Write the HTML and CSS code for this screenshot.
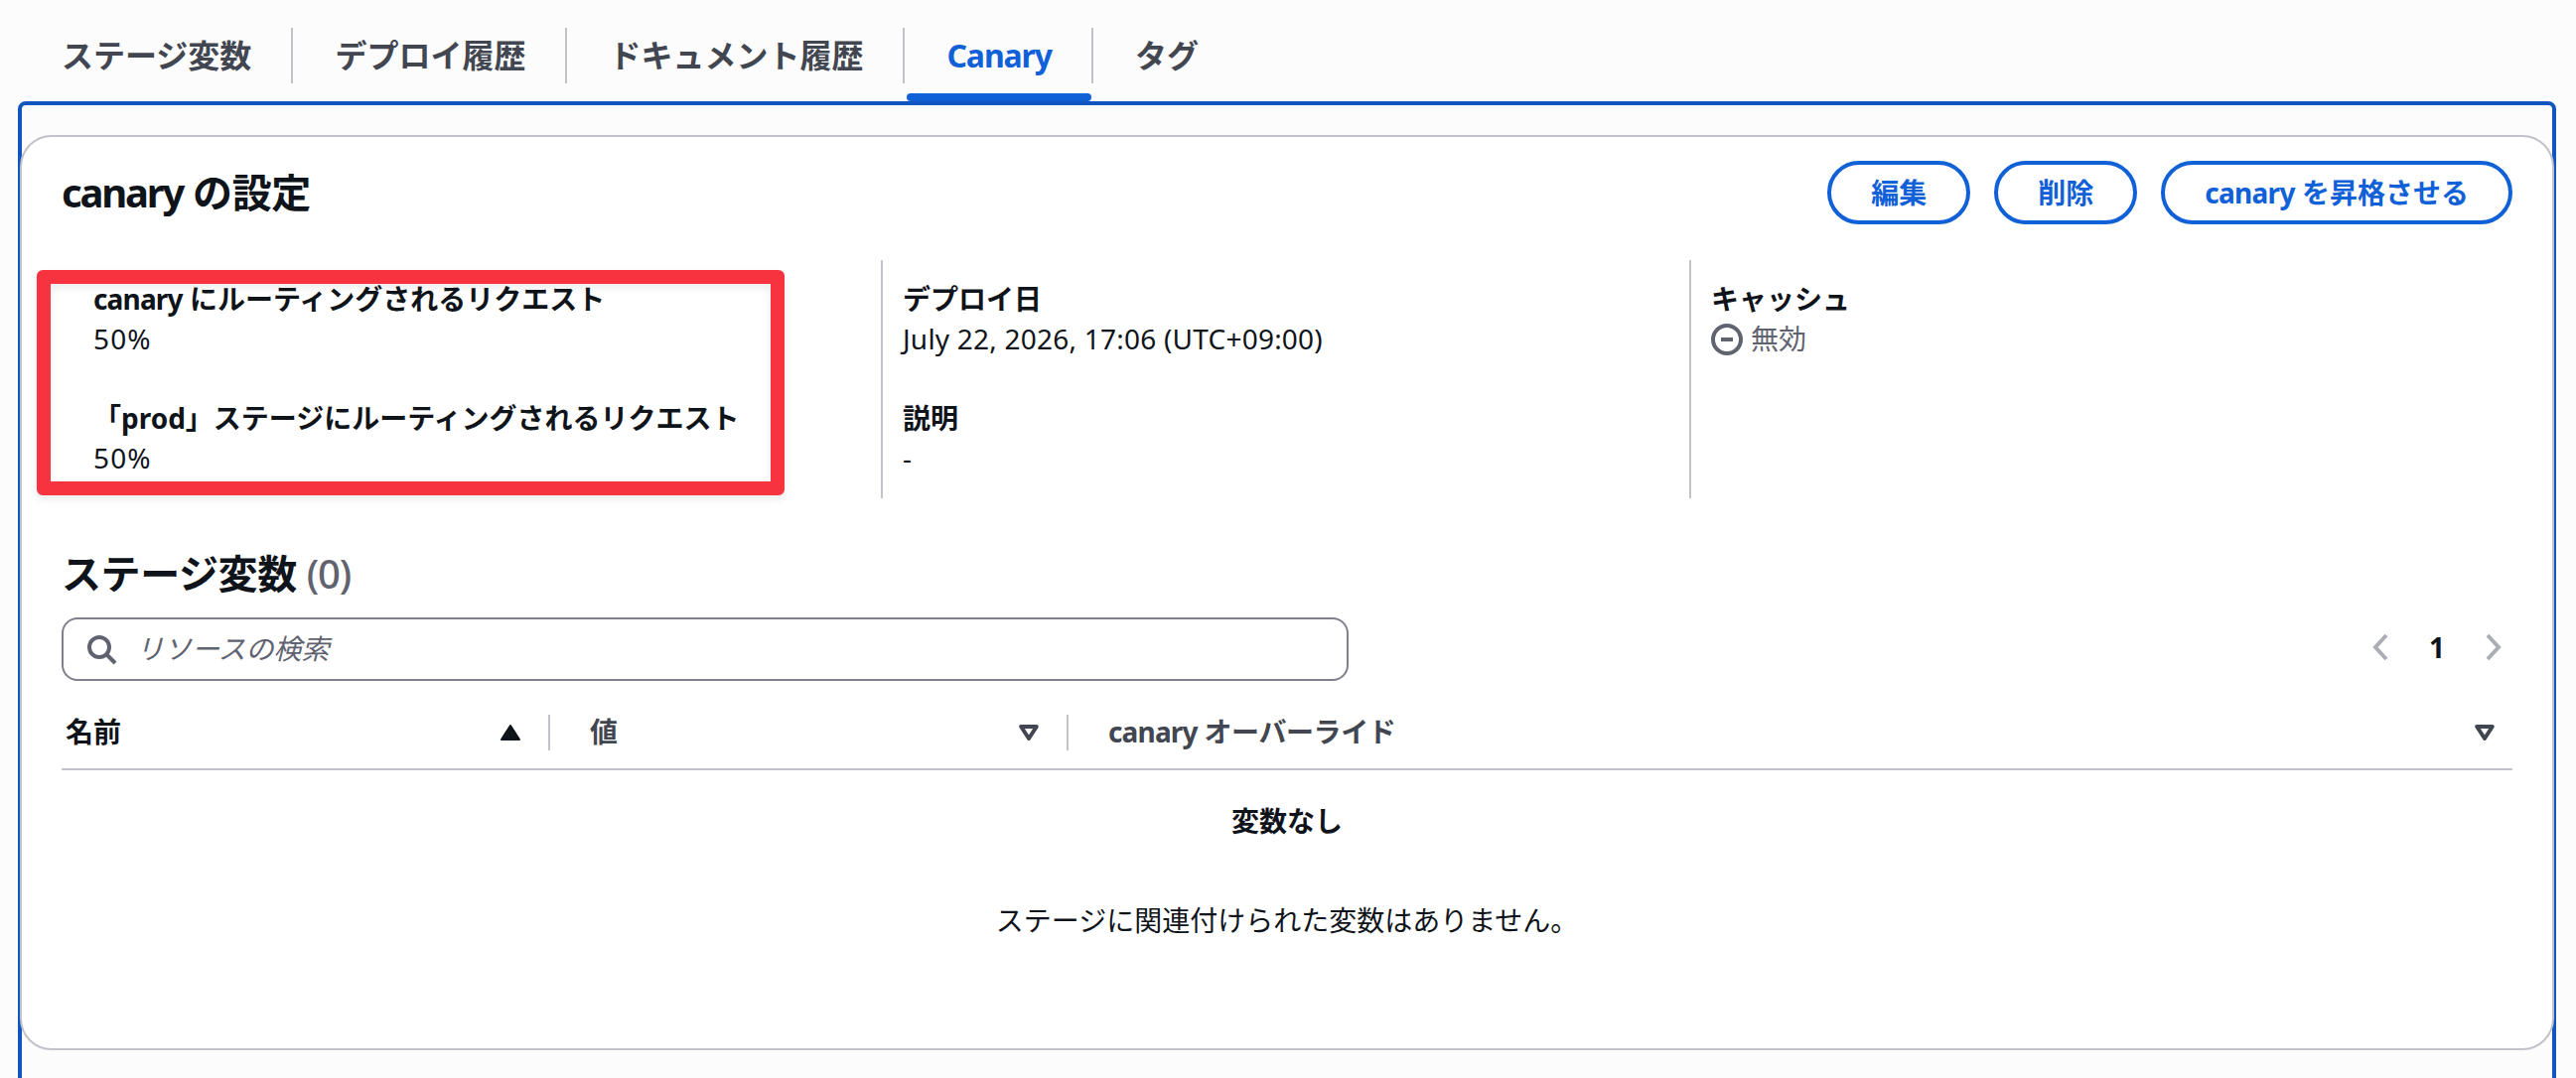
FILE: index.html
```html
<!DOCTYPE html>
<html lang="ja">
<head>
    <meta charset="utf-8">
    <title>Canary</title>
    <link rel="stylesheet" href="styles.css">
</head>
<body>
    <nav class="tabs">
        <a class="tab">ステージ変数</a>
        <a class="tab">デプロイ履歴</a>
        <a class="tab">ドキュメント履歴</a>
        <a class="tab active"><span class="en">Canary</span></a>
        <a class="tab">タグ</a>
    </nav>

    <main class="tab-content">
        <section class="card">
            <header class="card-header">
                <h2><span class="en">canary</span> の設定</h2>
                <div class="actions">
                    <button type="button">編集</button>
                    <button type="button">削除</button>
                    <button type="button"><span class="en">canary</span> を昇格させる</button>
                </div>
            </header>

            <div class="details">
                <div class="column first">
                    <div class="item">
                        <div class="label"><span class="en">canary</span> にルーティングされるリクエスト</div>
                        <div class="percent">50%</div>
                    </div>
                    <div class="item">
                        <div class="label">「prod」ステージにルーティングされるリクエスト</div>
                        <div class="percent">50%</div>
                    </div>
                    <div class="highlight"></div>
                </div>
                <div class="column">
                    <div class="item">
                        <div class="label">デプロイ日</div>
                        <div class="date">July 22, 2026, 17:06 (UTC+09:00)</div>
                    </div>
                    <div class="item">
                        <div class="label">説明</div>
                        <div>-</div>
                    </div>
                </div>
                <div class="column">
                    <div class="item">
                        <div class="label">キャッシュ</div>
                        <div class="status">
                            <svg width="32" height="32" viewBox="0 0 32 32" fill="none" stroke="currentColor" stroke-width="4">
                                <circle cx="16" cy="16" r="14"/>
                                <path d="M10 16h12"/>
                            </svg>
                            無効
                        </div>
                    </div>
                </div>
            </div>

            <h2 class="variables-title">ステージ変数 <span class="counter">(0)</span></h2>

            <div class="toolbar">
                <div class="search">
                    <svg width="32" height="32" viewBox="0 0 32 32" fill="none" stroke="currentColor" stroke-width="4">
                        <circle cx="14" cy="14" r="10"/>
                        <path d="M21 21l9 9"/>
                    </svg>
                    <span class="placeholder">リソースの検索</span>
                </div>
                <div class="pagination">
                    <svg width="16" height="28" viewBox="0 0 16 28" fill="none" stroke="currentColor" stroke-width="4">
                        <path d="M14 2L3 14l11 12"/>
                    </svg>
                    <span class="page">1</span>
                    <svg width="16" height="28" viewBox="0 0 16 28" fill="none" stroke="currentColor" stroke-width="4">
                        <path d="M2 2l11 12L2 26"/>
                    </svg>
                </div>
            </div>

            <div class="table-head">
                <div class="th sorted">
                    <span>名前</span>
                    <svg width="20" height="16" viewBox="0 0 20 16" fill="currentColor" stroke="currentColor" stroke-width="2" stroke-linejoin="round">
                        <path d="M10 1l9 14H1z"/>
                    </svg>
                </div>
                <div class="th">
                    <span>値</span>
                    <svg width="20" height="16" viewBox="0 0 20 16" fill="none" stroke="currentColor" stroke-width="4" stroke-linejoin="round">
                        <path d="M2.2 2h15.6L10 14z"/>
                    </svg>
                </div>
                <div class="th">
                    <span class="override"><span class="en">canary</span> オーバーライド</span>
                    <svg width="20" height="16" viewBox="0 0 20 16" fill="none" stroke="currentColor" stroke-width="4" stroke-linejoin="round">
                        <path d="M2.2 2h15.6L10 14z"/>
                    </svg>
                </div>
            </div>

            <div class="empty">
                <strong>変数なし</strong>
                <p>ステージに関連付けられた変数はありません。</p>
            </div>
        </section>
    </main>
</body>
</html>
```
FILE: styles.css
```css
* {
    box-sizing: border-box;
}

body {
    margin: 0;
    height: 1086px;
    overflow: hidden;
    background-color: #fcfcfd;
    color: #0f141a;
    font-family: "Noto Sans", "Noto Sans CJK JP", sans-serif;
    font-size: 28px;
    line-height: 40px;
}

svg {
    display: block;
    flex: none;
}

.en {
    letter-spacing: -0.03em;
}

.tabs {
    display: flex;
    gap: 2px;
    height: 102px;
    padding: 28px 0 0 22px;
    color: #424650;
    font-size: 32px;
    font-weight: 700;
}

.tab {
    position: relative;
    height: 56px;
    padding: 0 40px;
    line-height: 56px;
    border-right: 2px solid #c1c2ca;
}

.tab:last-child {
    border-right: none;
}

.tab.active {
    color: #1060d8;
}

.tab.active .en {
    letter-spacing: -0.035em;
}

.tab.active::after {
    content: "";
    position: absolute;
    left: 0;
    right: 0;
    bottom: -18px;
    height: 8px;
    border-radius: 4px;
    background-color: #1060d8;
}

.tab-content {
    height: 1020px;
    margin: 0 20px 0 18px;
    padding-top: 30px;
    border: 4px solid #1055c0;
    border-radius: 8px;
}

.card {
    position: relative;
    height: 922px;
    margin: 0 -2px;
    padding: 24px 40px 0;
    background-color: #fff;
    border: 2px solid #c1c2ca;
    border-radius: 32px;
}

.card-header {
    display: flex;
    align-items: center;
    justify-content: space-between;
    height: 64px;
}

h2 {
    margin: 0;
    font-size: 40px;
    line-height: 48px;
    letter-spacing: -0.01em;
}

h2 .en {
    letter-spacing: -0.055em;
}

.actions {
    display: flex;
    gap: 24px;
}

button {
    height: 64px;
    padding: 0 40px;
    background-color: #fff;
    border: 4px solid #1060d8;
    border-radius: 32px;
    color: #1060d8;
    font: inherit;
    font-weight: 700;
}

button .en {
    letter-spacing: -0.025em;
}

.details {
    display: grid;
    grid-template-columns: 825px 814px 1fr;
    height: 240px;
    margin-top: 36px;
}

.column {
    display: flex;
    flex-direction: column;
    gap: 40px;
    padding: 19px 20px 20px;
    border-left: 2px solid #c1c2ca;
}

.column.first {
    position: relative;
    padding-left: 32px;
    border-left: none;
}

.label {
    font-weight: 700;
}

.percent {
    letter-spacing: 0.04em;
}

.date {
    letter-spacing: 0.008em;
}

/* red frame around the routing ratios */
.highlight {
    position: absolute;
    left: -25px;
    top: 10px;
    width: 753px;
    height: 227px;
    border: 14px solid #f6333f;
    border-radius: 6px;
    box-shadow: 0 4px 8px rgba(0, 0, 0, 0.08), inset 0 4px 8px rgba(0, 0, 0, 0.08);
}

.status {
    display: flex;
    align-items: center;
    gap: 8px;
    color: #5f6370;
}

.status svg {
    margin-top: 2px;
}

.variables-title {
    margin-top: 52px;
}

.counter {
    color: #5f6370;
    font-weight: 500;
    letter-spacing: -0.03em;
}

.toolbar {
    display: flex;
    align-items: center;
    justify-content: space-between;
    margin-top: 20px;
}

.search {
    display: flex;
    align-items: center;
    gap: 19px;
    width: 1296px;
    height: 64px;
    padding: 0 22px;
    border: 2px solid #7f808b;
    border-radius: 16px;
    color: #5f6370;
}

.placeholder {
    padding-bottom: 3px;
    font-style: italic;
}

.pagination {
    display: flex;
    align-items: center;
    gap: 40px;
    height: 60px;
    padding-right: 11px;
    color: #acaeb6;
}

.pagination svg {
    margin-bottom: 4px;
}

.page {
    width: 18px;
    margin-bottom: 4px;
    color: #0f141a;
    font-weight: 700;
    text-align: center;
}

.table-head {
    display: grid;
    grid-template-columns: 492px 522px 1fr;
    height: 90px;
    padding-top: 34px;
    border-bottom: 2px solid #c1c2ca;
    color: #424650;
    font-weight: 700;
}

.th {
    display: flex;
    align-items: center;
    justify-content: space-between;
    height: 36px;
    padding: 0 28px 0 40px;
    border-right: 2px solid #c1c2ca;
}

.th > span {
    padding-bottom: 2px;
}

.th.sorted {
    padding-left: 4px;
    color: #0f141a;
}

.th:last-child {
    padding-right: 18px;
    border-right: none;
}

.override {
    letter-spacing: -0.015em;
}

.empty {
    padding-top: 31px;
    text-align: center;
}

.empty strong {
    display: block;
}

.empty p {
    margin: 60px 0 0;
}
```
